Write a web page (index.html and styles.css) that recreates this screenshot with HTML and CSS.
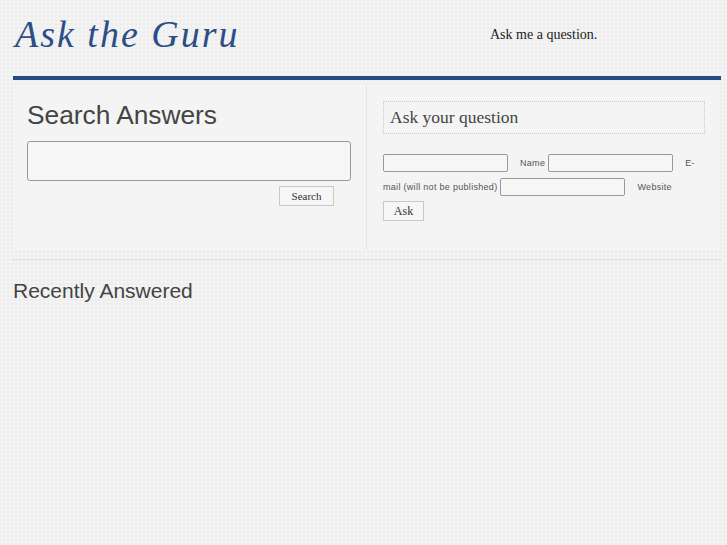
FILE: index.html
```html
<!DOCTYPE html>
<html>
<head>
<meta charset="utf-8">
<link rel="stylesheet" href="styles.css">
</head>
<body>
<div class="page">
  <header class="masthead">
    <h1 class="logo">Ask the Guru</h1>
    <p class="tagline">Ask me a question.</p>
  </header>
  <div class="rule"></div>
  <section class="panel">
    <div class="col left">
      <h2 class="search-title">Search Answers</h2>
      <input class="search-input" type="text">
      <div class="search-actions"><button class="btn">Search</button></div>
    </div>
    <div class="col right">
      <div class="question-box">Ask your question</div>
      <div class="ask-form">
        <input class="field" type="text"><label class="lbl">Name</label><input class="field" type="text"><label class="lbl">E-mail (will not be published)</label><input class="field" type="text"><label class="lbl">Website</label>
        <div><button class="btn ask">Ask</button></div>
      </div>
    </div>
  </section>
  <div class="sep"></div>
  <h2 class="recent">Recently Answered</h2>
</div>
</body>
</html>
```
FILE: styles.css
```css
html, body {
  margin: 0;
  padding: 0;
}
body {
  background-color: #efefef;
  background-image: radial-gradient(rgba(255,255,255,0.5) 0.8px, transparent 1px);
  background-size: 4px 4px;
  font-family: "Liberation Serif", serif;
  color: #333;
}
.page {
  padding: 0 6px 0 13px;
}
.masthead {
  display: flex;
  align-items: flex-start;
  height: 76px;
}
.logo {
  margin: 12px 0 0 2px;
  font-family: "Liberation Serif", serif;
  font-style: italic;
  font-weight: normal;
  font-size: 38px;
  letter-spacing: 2px;
  color: #2b4e86;
  line-height: 44px;
  width: 475px;
}
.tagline {
  margin: 26px 0 0 0;
  font-size: 14px;
  line-height: 18px;
  color: #222;
}
.rule {
  height: 4px;
  background: #26497f;
}
.panel {
  display: flex;
  margin-top: 4px;
  height: 165px;
  background: #f4f4f4;
  border-right: 1px dotted #e4e4e4;
}
.col {
  box-sizing: border-box;
}
.left {
  width: 354px;
  padding: 15px 15px 0 14px;
  border-right: 1px dotted #d8d8d8;
}
.right {
  flex: 1;
  padding: 17px 16px 0 16px;
}
.search-title {
  margin: 0;
  font-family: "Liberation Sans", Arial, sans-serif;
  font-weight: normal;
  font-size: 26.3px;
  line-height: 32px;
  color: #444;
}
.search-input {
  display: block;
  box-sizing: border-box;
  margin-top: 10px;
  width: 324px;
  height: 40px;
  border: 1px solid #9a9a9a;
  border-radius: 3px;
  background: #f6f6f6;
}
.search-actions {
  display: flex;
  justify-content: flex-end;
  padding-right: 17px;
  margin-top: 5px;
}
.btn {
  font-family: "Liberation Serif", serif;
  font-size: 11px;
  color: #333;
  background: #f6f6f6;
  border: 1px solid #c8c8c8;
  padding: 0;
  height: 20px;
  width: 55px;
}
.btn.ask {
  width: 41px;
  margin-top: 2px;
  height: 20px;
  font-size: 12px;
}
.question-box {
  box-sizing: border-box;
  height: 33px;
  border: 1px dotted #c8c8c8;
  font-size: 17.5px;
  line-height: 31px;
  padding-left: 6px;
  color: #444;
}
.ask-form {
  margin-top: 16px;
  width: 322px;
  font-family: "Liberation Sans", Arial, sans-serif;
  font-size: 9px;
  letter-spacing: 0.3px;
  line-height: 24px;
  color: #555;
}
.field {
  box-sizing: border-box;
  width: 125px;
  height: 18px;
  border: 1px solid #999;
  border-radius: 2px;
  background: #f6f6f6;
  vertical-align: middle;
  margin: 0;
}
.lbl {
  margin: 0 3px 0 12px;
  vertical-align: middle;
}
.sep {
  margin-top: 10px;
  border-top: 1px dotted #cfcfcf;
}
.recent {
  margin: 19px 0 0 0;
  font-family: "Liberation Sans", Arial, sans-serif;
  font-weight: normal;
  font-size: 21px;
  line-height: 24px;
  color: #444;
}
```
